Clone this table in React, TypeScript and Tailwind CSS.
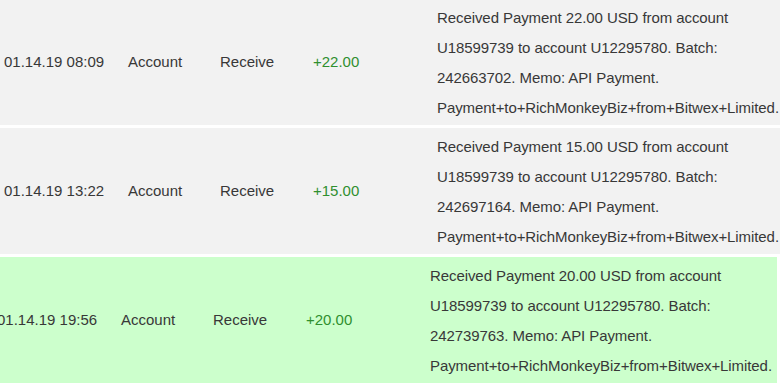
const rows = [
  {
    date: "01.14.19 08:09",
    amount: "+22.00",
    lines: [
      "Received Payment 22.00 USD from account",
      "U18599739 to account U12295780. Batch:",
      "242663702. Memo: API Payment.",
      "Payment+to+RichMonkeyBiz+from+Bitwex+Limited.",
    ],
    highlight: false,
  },
  {
    date: "01.14.19 13:22",
    amount: "+15.00",
    lines: [
      "Received Payment 15.00 USD from account",
      "U18599739 to account U12295780. Batch:",
      "242697164. Memo: API Payment.",
      "Payment+to+RichMonkeyBiz+from+Bitwex+Limited.",
    ],
    highlight: false,
  },
  {
    date: "01.14.19 19:56",
    amount: "+20.00",
    lines: [
      "Received Payment 20.00 USD from account",
      "U18599739 to account U12295780. Batch:",
      "242739763. Memo: API Payment.",
      "Payment+to+RichMonkeyBiz+from+Bitwex+Limited.",
    ],
    highlight: true,
  },
];

export default function App() {
  return (
    <div className="w-[780px] h-[386px] overflow-hidden bg-white font-['Liberation_Sans',Arial,sans-serif] text-[15px] text-[#383838]">
      <div className="flex flex-col gap-[3px]">
        {rows.map((r, i) => (
          <div
            key={r.date}
            className={
              r.highlight
                ? "flex items-center h-[126px] w-[784px] -ml-[7px] bg-[#ccffcc]"
                : i === 0
                ? "flex items-center h-[125px] w-[780px] bg-[#f2f2f2]"
                : "flex items-center h-[126px] w-[780px] bg-[#f2f2f2]"
            }
          >
            <div className="w-[128px] shrink-0 pl-[4px] whitespace-nowrap">{r.date}</div>
            <div className="w-[92px] shrink-0">Account</div>
            <div className="w-[93px] shrink-0">Receive</div>
            <div className="w-[124px] shrink-0 text-[#2f8f2f]">{r.amount}</div>
            <div className="flex-1 min-w-0 leading-[30px] whitespace-nowrap pt-[1px] tracking-[-0.08px]">
              {r.lines.map((l) => (
                <div key={l}>{l}</div>
              ))}
            </div>
          </div>
        ))}
      </div>
    </div>
  );
}
